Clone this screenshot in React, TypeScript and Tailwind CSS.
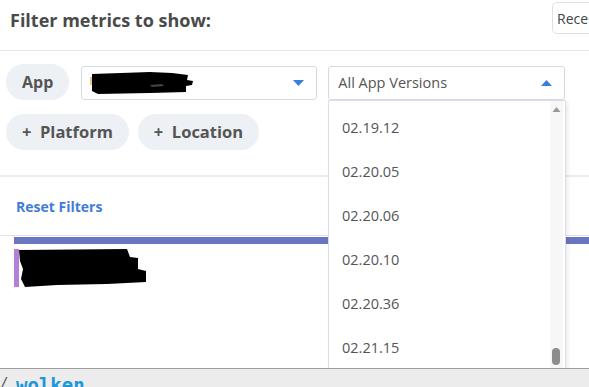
import React from "react";

const versions = ["02.19.12", "02.20.05", "02.20.06", "02.20.10", "02.20.36", "02.21.15"];

function Caret({ up }: { up?: boolean }) {
  return (
    <svg width="11" height="6" viewBox="0 0 11 6" className="shrink-0">
      {up ? <polygon points="0,6 11,6 5.5,0" fill="#3b7ddd" /> : <polygon points="0,0 11,0 5.5,6" fill="#3b7ddd" />}
    </svg>
  );
}

export default function App() {
  return (
    <div className="w-[589px] h-[387px] flex flex-col bg-white overflow-hidden font-['Open_Sans',sans-serif]">
      <div className="relative flex-1 overflow-hidden flex flex-col">
        {/* header */}
        <div className="h-[51px] shrink-0 border-b border-[#e6e6e6] flex items-start">
          <div className="pl-[10px] pt-[7px] text-[18px] leading-[26px] font-bold text-[#4a4a4a]">Filter metrics to show:</div>
          <div className="ml-auto mt-[2px] h-[32px] w-[45px] shrink-0 -mr-[8px] border border-[#dde1e6] rounded-[5px] pl-[4px] flex items-center text-[14px] text-[#444] overflow-hidden whitespace-nowrap">
            Rece
          </div>
        </div>

        {/* filters */}
        <div className="shrink-0 px-[6px] pt-[13px] pb-[25px] border-b-2 border-[#ececec]">
          <div className="flex items-start">
            <div className="h-[36px] px-[16px] rounded-full bg-[#edf0f4] flex items-center text-[16px] font-bold text-[#555]">App</div>
            <div className="ml-[12px] mt-[2px] w-[236px] h-[34px] border border-[#d6dbe2] rounded-[3px] flex items-center pl-[8px] pr-[12px]">
              <svg width="104" height="24" viewBox="0 0 104 24" className="shrink-0">
                <rect x="0" y="6" width="3" height="8" fill="#e8c98a" />
                <path d="M2 3 L60 1 L82 2 L98 4 L97 9 L103 10 L102 14 L96 15 L96 21 L60 22 L8 23 L2 20 Z" fill="#000" />
                <path d="M60 14 L72 13 L74 15 L62 16 Z" fill="#444" />
              </svg>
              <div className="ml-auto"><Caret /></div>
            </div>
            <div className="ml-[11px] mt-[2px] w-[237px] h-[34px] border border-[#d6dbe2] rounded-[3px] flex items-center pl-[9px] pr-[12px] text-[14.5px] text-[#555]">
              All App Versions
              <div className="ml-auto"><Caret up /></div>
            </div>
          </div>
          <div className="flex mt-[14px] gap-[9px]">
            <div className="h-[36px] px-[16px] rounded-full bg-[#edf0f4] flex items-center text-[16.5px] font-bold text-[#555]">+&nbsp;&nbsp;Platform</div>
            <div className="h-[36px] px-[16px] rounded-full bg-[#edf0f4] flex items-center text-[16.5px] font-bold text-[#555]">+&nbsp;&nbsp;Location</div>
          </div>
        </div>

        {/* reset */}
        <div className="h-[59px] shrink-0 border-b border-[#e2e2e2] flex items-center pl-[16px] text-[14px] font-bold text-[#3f7cd8]">
          Reset Filters
        </div>
        <div className="ml-[14px] mt-[1px] h-[7px] bg-[#6a75c0] shrink-0" />
        <div className="ml-[14px] mt-[5px] flex shrink-0">
          <div className="w-[5px] h-[38px] bg-[#b27fd9]" />
          <svg width="130" height="38" viewBox="0 0 130 38" className="-ml-[2px]">
            <path d="M2 1 L110 0 L113 8 L121 9 L121 20 L129 22 L129 33 L90 35 L40 36 L8 38 L4 30 L6 20 L3 12 Z" fill="#000" />
          </svg>
        </div>

        {/* dropdown */}
        <div className="absolute left-[328px] top-[100px] w-[238px] h-[290px] bg-white border border-[#d9dee8] shadow-[2px_2px_4px_rgba(0,0,0,0.08)]">
          <div className="pt-[5px]">
            {versions.map((v) => (
              <div key={v} className="h-[44px] flex items-center pl-[13px] text-[14.5px] text-[#555]">{v}</div>
            ))}
          </div>
          <div className="absolute right-[2px] top-0 w-[13px] h-full bg-[#f7f7f7]">
            <svg width="13" height="8" viewBox="0 0 13 8" className="absolute top-[5px] left-0">
              <polygon points="2.5,6 10.5,6 6.5,1" fill="#9a9a9a" />
            </svg>
            <div className="absolute left-[2px] top-[247px] w-[8px] h-[17px] rounded-full bg-[#8d8d8d]" />
            <svg width="13" height="8" viewBox="0 0 13 8" className="absolute top-[268px] left-0">
              <polygon points="2.5,1 10.5,1 6.5,6" fill="#9a9a9a" />
            </svg>
          </div>
        </div>
      </div>

      {/* bottom bar */}
      <div className="h-[19px] shrink-0 border-t border-[#9e9e9e] bg-[#ececec] relative overflow-hidden">
        <div className="absolute left-0 top-[6px] text-[14px] leading-none text-[#555] font-['DejaVu_Sans_Mono',monospace]">/</div>
        <div className="absolute left-[16px] top-[7px] text-[19px] leading-none font-bold text-[#1e97d8] font-['DejaVu_Sans_Mono',monospace]">wolken</div>
      </div>
    </div>
  );
}
